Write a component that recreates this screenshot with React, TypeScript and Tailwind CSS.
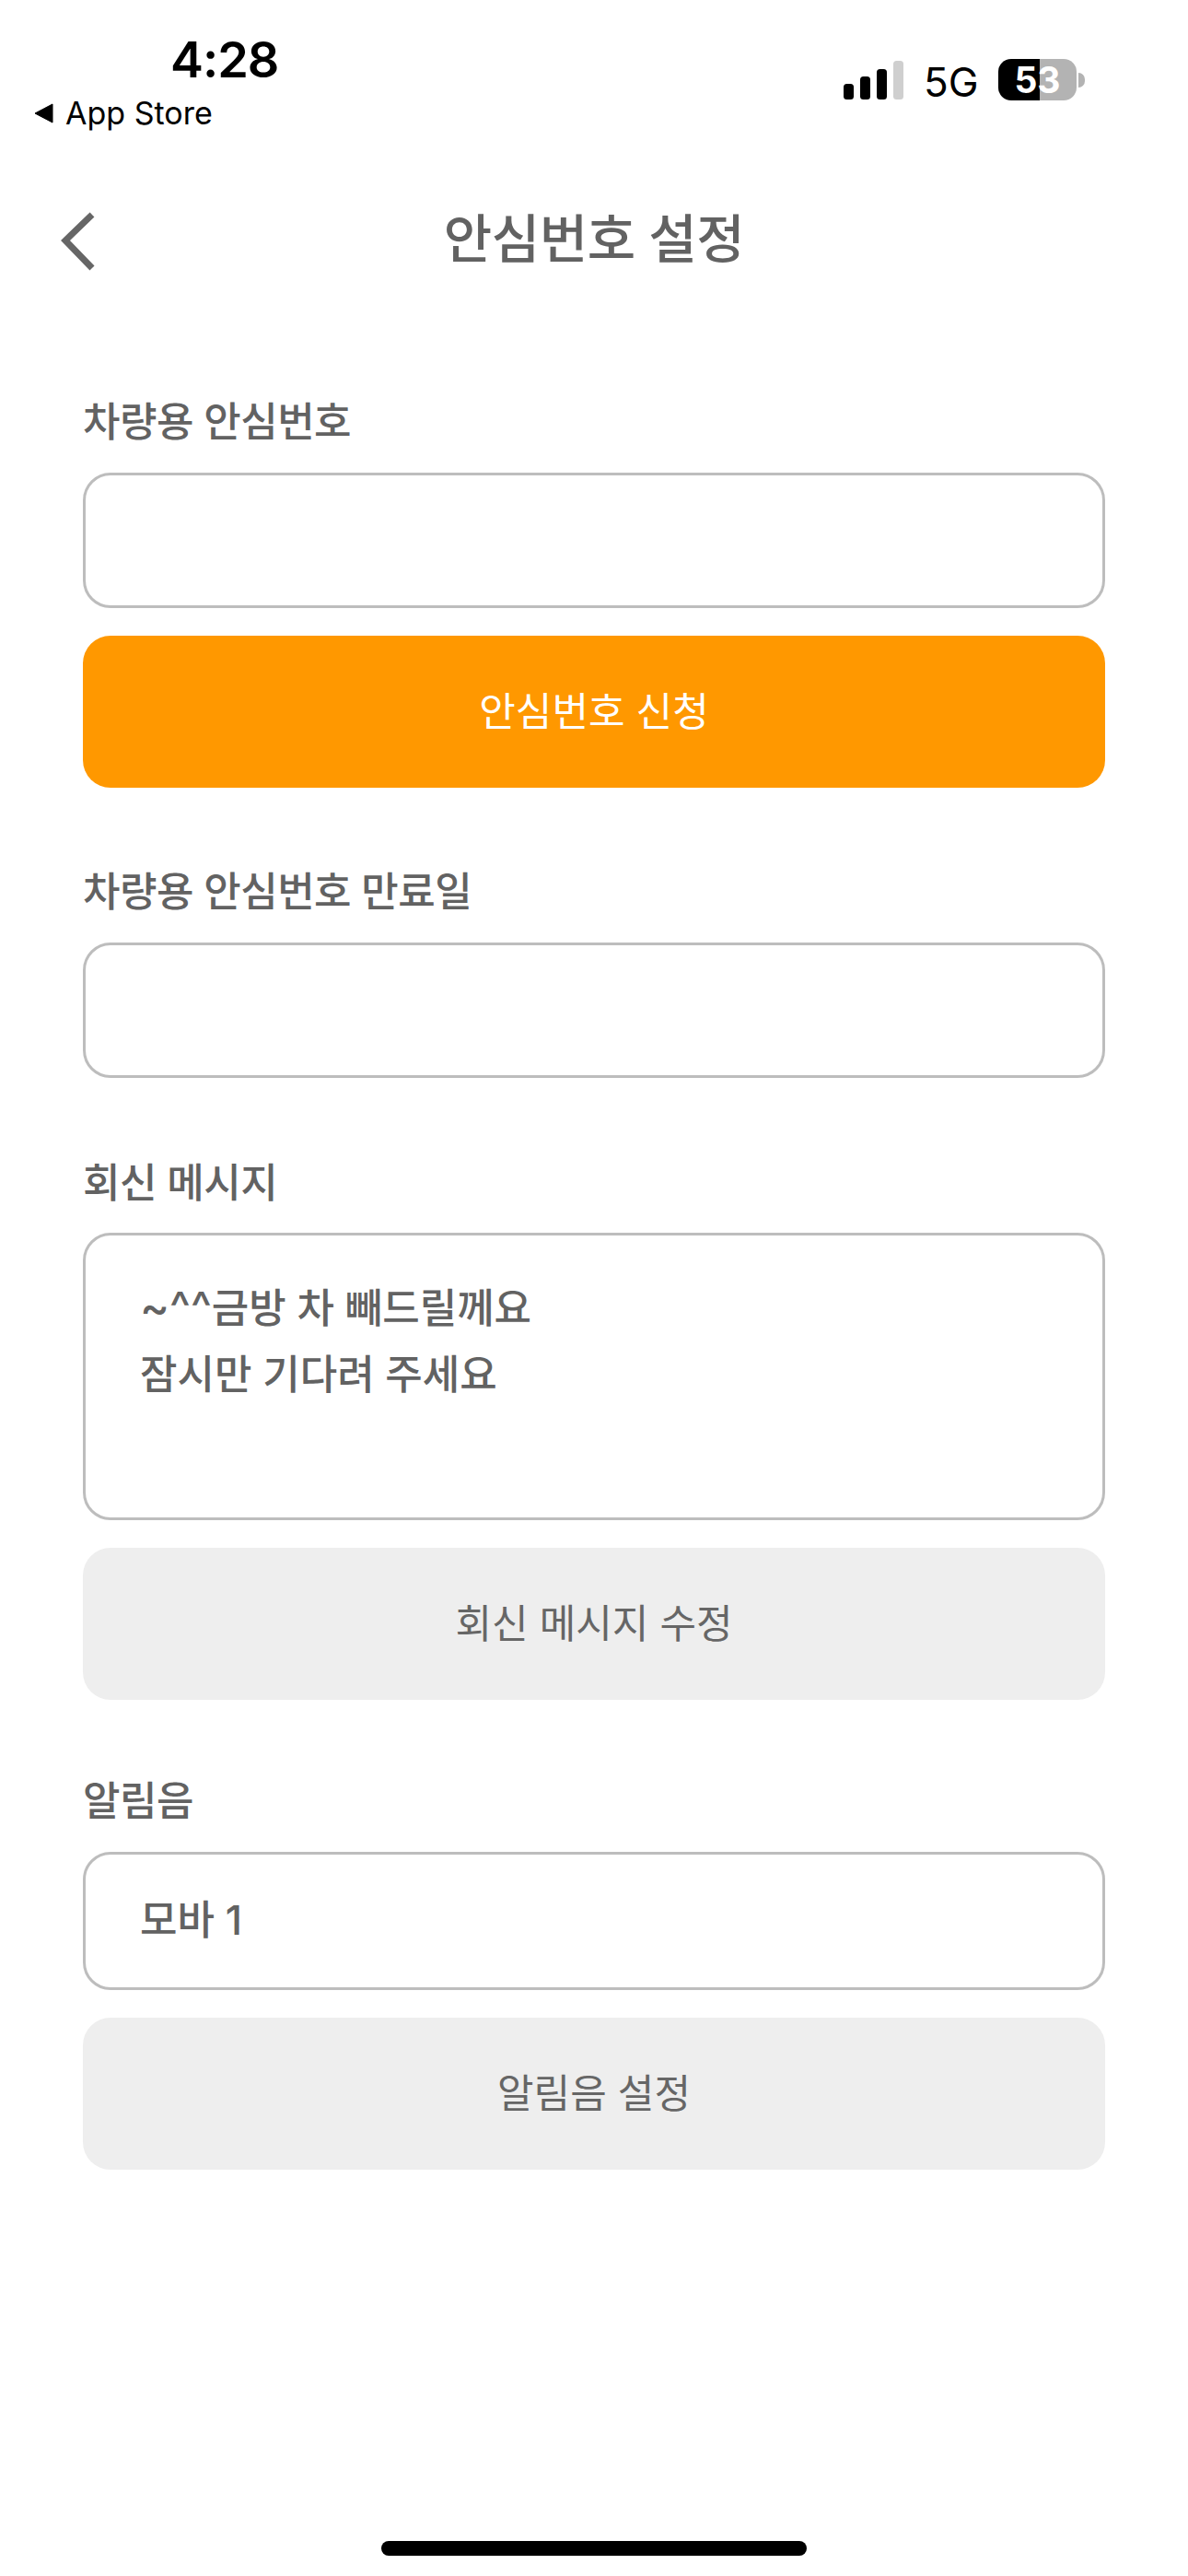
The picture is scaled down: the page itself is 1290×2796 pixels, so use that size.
const font = { fontFamily: 'Inter, "Noto Sans CJK KR", sans-serif' };

function Label({ children }: { children: string }) {
  return <div className="h-[60px] flex items-center text-[44px] font-medium text-[#626262] leading-none tracking-[-0.5px]">{children}</div>;
}

function Box({ children, size = "h-[147px] flex items-center" }: { children?: React.ReactNode; size?: string }) {
  return (
    <div className={`w-full rounded-[30px] border-[3px] border-[#bdbdbd] bg-white pl-[59px] pr-[60px] text-[#626262] text-[44px] font-medium ${size}`}>
      {children}
    </div>
  );
}

function Btn({ children, orange }: { children: string; orange?: boolean }) {
  return (
    <div className={`mt-[30px] w-full h-[165px] rounded-[30px] flex items-center justify-center text-[43px] ${orange ? "bg-[#ff9800] text-white" : "bg-[#eeeeee] text-[#666666]"}`}>
      {children}
    </div>
  );
}

export default function App() {
  return (
    <div className="w-[1290px] h-[2796px] bg-white relative overflow-hidden" style={font}>
      <div className="h-[171px] relative" style={{ fontFamily: "Inter, sans-serif" }}>
        <div className="absolute left-[185px] top-[32px] text-[54px] font-semibold text-black leading-[66px] tracking-[-1px]">4:28</div>
        <div className="absolute left-[37px] top-[103px] flex items-center gap-[13px] text-[34px] text-black leading-[40px]">
          <svg width="21" height="22" viewBox="0 0 21 22"><path d="M1 11 L20 1 V21 Z" fill="#000" stroke="#000" strokeLinejoin="round" /></svg>
          <span>App Store</span>
        </div>
        <div className="absolute left-[916px] top-[66px]">
          <svg width="66" height="42" viewBox="0 0 66 42">
            <rect x="0" y="25" width="11" height="17" rx="3.5" fill="#000" />
            <rect x="18" y="17" width="11" height="25" rx="3.5" fill="#000" />
            <rect x="36" y="9" width="11" height="33" rx="3.5" fill="#000" />
            <rect x="54" y="0" width="11" height="42" rx="3.5" fill="#cfcfcf" />
          </svg>
        </div>
        <div className="absolute left-[1003px] top-[64px] text-[44px] text-black leading-[50px]">5G</div>
        <div className="absolute left-[1084px] top-[64px] w-[85px] h-[45px] rounded-[14px] overflow-hidden flex">
          <div className="w-[45px] bg-black" />
          <div className="w-[40px] bg-[#b3b3b3]" />
          <div className="absolute inset-0 flex items-center justify-center text-[39px] font-bold text-white leading-none">53</div>
        </div>
        <div className="absolute left-[1171px] top-[79px] w-[7px] h-[16px] rounded-r-full bg-[#b3b3b3]" />
      </div>

      <div className="h-[176px] relative flex items-center justify-center">
        <svg className="absolute left-[60px] top-[57px]" width="50" height="66" viewBox="0 0 50 66">
          <path d="M40 5 L11 33 L40 63" fill="none" stroke="#666" strokeWidth="7" />
        </svg>
        <h1 className="text-[57px] font-medium text-[#626262] leading-none tracking-[-0.5px]">안심번호 설정</h1>
      </div>

      <div className="px-[90px] pt-[81px] flex flex-col">
        <Label>차량용 안심번호</Label>
        <div className="mt-[25px]"><Box /></div>
        <Btn orange>안심번호 신청</Btn>
        <div className="mt-[83px]"><Label>차량용 안심번호 만료일</Label></div>
        <div className="mt-[25px]"><Box /></div>
        <div className="mt-[84px]"><Label>회신 메시지</Label></div>
        <div className="mt-[24px]">
          <Box size="h-[312px] pt-[42px]">
            <div className="leading-[72px]"><span className="text-[48px]">~^^</span>금방 차 빼드릴께요</div>
            <div className="leading-[72px]">잠시만 기다려 주세요</div>
          </Box>
        </div>
        <Btn>회신 메시지 수정</Btn>
        <div className="mt-[80px]"><Label>알림음</Label></div>
        <div className="mt-[25px]"><Box size="h-[150px] flex items-center pb-[2px]">모바 1</Box></div>
        <Btn>알림음 설정</Btn>
      </div>

      <div className="absolute left-[414px] top-[2758px] w-[462px] h-[16px] rounded-full bg-black" />
    </div>
  );
}
